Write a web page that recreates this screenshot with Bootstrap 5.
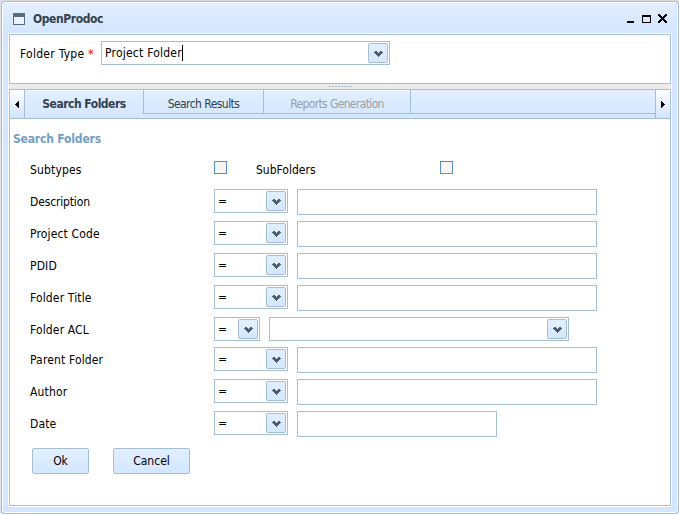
<!DOCTYPE html>
<html lang="en">
<head>
<meta charset="utf-8">
<title>OpenProdoc</title>
<link href="https://cdn.jsdelivr.net/npm/bootstrap@5.3.0/dist/css/bootstrap.min.css" rel="stylesheet">
<style>
:root{--line:#a4bed4;--face:linear-gradient(#e2efff,#d3e7ff)}
body{width:679px;height:514px;padding:1px 0 0 1px;background:#dde3ea;font:12px/16px "DejaVu Sans Condensed","DejaVu Sans",sans-serif;font-stretch:condensed;color:#000}
.backdrop-line{left:0;top:0;width:679px;height:3px;background:#d8dcdf}
.backdrop-text{left:126px;top:-12px;font-size:13px;font-weight:bold;color:#aaa}
.win{width:678px;height:513px;border:1px solid var(--line);border-radius:4px;background:#d3e5ff;box-shadow:inset 0 0 0 1px #fff;padding:0 7px 7px 6px}
.win-title{height:30px;margin:1px -5px 0 -5px;padding:0 8px 0 10px;background:linear-gradient(#e3effd,#d3e5ff);border-radius:3px 3px 0 0;color:#34404b}
.win-title b{margin-left:8px;padding-top:1px;letter-spacing:-.4px}
.win-icon{margin-top:2px}
.inner{width:664px;height:474px;padding:1px;background:#fff}
.top-panel{height:50px;border:1px solid var(--line);padding:6px 0 0 10px}
.type-label{width:81px;padding-top:5px;letter-spacing:.27px}
.required{color:#f00}
.type-value{letter-spacing:.23px}
.splitter{height:5px;background:#ebebeb}
.splitter i{width:23px;height:1px;background:repeating-linear-gradient(90deg,#a4bed4 0 2px,transparent 2px 3px)}
.tabs{height:30px;border:1px solid var(--line);background:linear-gradient(#e2efff,#d3e7ff)}
.scroll-btn{width:15px;background:linear-gradient(#fff,#d3e5ff)}
.scroll-l{border-right:1px solid var(--line)}
.scroll-r{border-left:1px solid var(--line)}
.tab{height:24px;border-right:1px solid var(--line);border-bottom:1px solid var(--line);color:#34404b;padding-top:4px;box-shadow:inset 0 1px #f3f8ff}
.tab-active{width:119px;border-bottom:0;font-weight:bold;letter-spacing:-.5px}
.tab-b{width:120px;letter-spacing:-.55px}
.tab-c{width:147px;color:#999ea5;letter-spacing:-.63px}
.tab-rest{height:24px;border-bottom:1px solid var(--line)}
.pane{height:387px;border:1px solid var(--line);border-top:0}
.pane-head{height:38px;padding:12px 0 0 3px;color:#6f9fc6;font-weight:bold;letter-spacing:-.17px}
.frow{height:32px;padding-left:20px}
.frow-short{height:30px}
.lbl{width:184px;padding-top:5px;letter-spacing:.15px}
.lbl-tight{letter-spacing:-.15px}
.lbl-plain{letter-spacing:0}
.lbl-second{margin-left:29px}
.chk{width:13px;height:13px;margin-top:4px;border:1px solid #5a8fbd;background:#f5f5f5}
.combo{height:24px;border:1px solid var(--line);background:#fff;padding:0 1px 0 3px}
.combo-op{width:74px;margin-right:9px}
.combo-sm{width:46px}
.combo-wide{width:300px}
.combo-type{width:289px}
.combo-btn{width:20px;height:20px;border:1px solid var(--line);border-radius:2px;background:var(--face)}
.combo-btn svg{margin-top:2px}
.field{width:300px;height:26px;border:1px solid var(--line);background:#fff}
.field-date{width:200px}
.push.btn{height:26px;border:1px solid var(--line);border-radius:2px;background:var(--face);padding:0;margin-top:5px;font:inherit;color:#000}
.ok{width:57px;margin-left:2px}
.cancel{width:77px;margin-left:24px}
.caret{width:1px;height:16px;background:#000}
svg{display:block;shape-rendering:crispEdges}
</style>
</head>
<body class="m-0 overflow-hidden position-relative">
<svg width="0" height="0" class="position-absolute"><defs>
<path id="chev" d="M0 1h1V0h2v1h1v1h1V1h1V0h2v1h1v1H8v1H7v1H6v1H5v1H4V5H3V4H2V3H1V2H0z" fill="#4d5d6c"/></defs></svg>
<div class="position-absolute backdrop-line"></div>
<div class="position-absolute backdrop-text">Current Folder</div>
<main class="win position-relative">
 <header class="win-title d-flex align-items-center">
  <svg width="12" height="12" class="win-icon"><path d="M0 0h12v12H0z" fill="#5b6b78"/><path d="M1 4h10v7H1z" fill="#e8f1fc"/></svg>
  <b class="text-nowrap">OpenProdoc</b>
  <svg width="42" height="12" class="ms-auto">
   <path d="M1 9h7v2H1z"/><path d="M16 3h9v8h-9zM17 5v5h7V5z" fill-rule="evenodd"/>
   <path d="M32 2h2v1h1v1h1v1h1V4h1V3h1V2h2v1h0v1h-1v1h-1v1h-1v1h1v1h1v1h1v2h-2v-1h-1V9h-1V8h-1v1h-1v1h-1v1h-2V9h1V8h1V7h1V6h-1V5h-1V4h-1z"/>
  </svg>
 </header>
 <div class="inner">
  <section class="top-panel d-flex">
   <div class="type-label text-nowrap">Folder Type <span class="required">*</span></div>
   <div class="combo combo-type d-flex align-items-center"><span class="type-value">Project Folder</span><span class="caret"></span><span class="combo-btn d-flex align-items-center justify-content-center ms-auto"><svg width="9" height="6"><use href="#chev"/></svg></span></div>
  </section>
  <div class="splitter d-flex align-items-center justify-content-center"><i></i></div>
  <nav class="tabs d-flex">
   <div class="scroll-btn scroll-l d-flex align-items-center justify-content-center"><svg width="4" height="7"><path d="M3 0h1v7H3V6H2V5H1V4H0V3h1V2h1V1h1z"/></svg></div>
   <div class="tab tab-active d-flex align-items-center justify-content-center">Search Folders</div>
   <div class="tab tab-b d-flex align-items-center justify-content-center">Search Results</div>
   <div class="tab tab-c d-flex align-items-center justify-content-center">Reports Generation</div>
   <div class="tab-rest flex-grow-1"></div>
   <div class="scroll-btn scroll-r d-flex align-items-center justify-content-center"><svg width="4" height="7"><path d="M0 0h1v1h1v1h1v1h1v1H3v1H2v1H1v1H0z"/></svg></div>
  </nav>
  <section class="pane">
   <div class="pane-head">Search Folders</div>
   <div class="frow d-flex align-items-start"><div class="lbl">Subtypes</div><span class="chk"></span><div class="lbl lbl-second lbl-plain">SubFolders</div><span class="chk"></span></div>
   <div id="rows"></div>
   <div class="frow d-flex align-items-start"><button class="push btn ok">Ok</button><button class="push btn cancel">Cancel</button></div>
  </section>
 </div>
</main>
<script>
// Criteria rows: label, kind of value control, label spacing class
const arrow='<span class="combo-btn d-flex align-items-center justify-content-center ms-auto"><svg width="9" height="6"><use href="#chev"/></svg></span>';
const rows=[['Description','','lbl-tight'],['Project Code'],['PDID'],['Folder Title'],['Folder ACL','acl'],['Parent Folder'],['Author'],['Date','date']];
document.getElementById('rows').innerHTML=rows.map(([t,k,c])=>
 `<div class="frow ${k==='acl'?'frow-short':''} d-flex align-items-start"><div class="lbl ${c||''}">${t}</div>`+
 `<div class="combo combo-op ${k==='acl'?'combo-sm':''} d-flex align-items-center"><span>=</span>${arrow}</div>`+
 (k==='acl'?`<div class="combo combo-wide d-flex align-items-center">${arrow}</div>`:`<div class="field ${k==='date'?'field-date':''}"></div>`)+'</div>').join('');
</script>
<script src="https://cdn.jsdelivr.net/npm/bootstrap@5.3.0/dist/js/bootstrap.bundle.min.js"></script>
</body>
</html>
